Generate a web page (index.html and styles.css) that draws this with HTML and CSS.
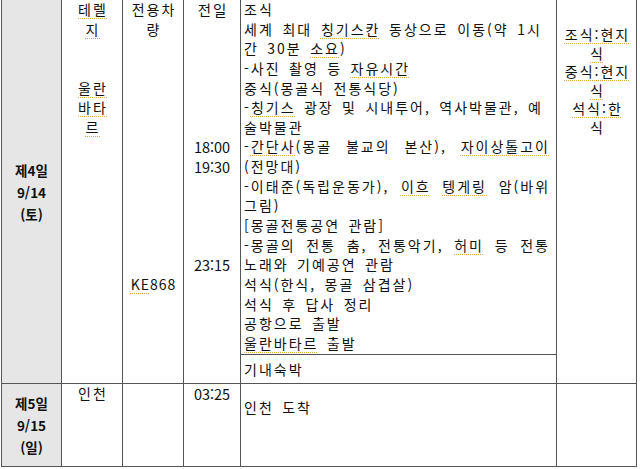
FILE: index.html
```html
<!DOCTYPE html>
<html lang="ko">
<head>
<meta charset="utf-8">
<title>일정표</title>
<link rel="stylesheet" href="styles.css">
</head>
<body>
<table class="itin">
  <colgroup>
    <col class="c-day">
    <col class="c-place">
    <col class="c-car">
    <col class="c-time">
    <col class="c-plan">
    <col class="c-meal">
  </colgroup>
  <tr class="row-main">
    <td class="day" rowspan="2"><div class="day-text">제4일<br>9/14<br>(토)</div></td>
    <td class="place" rowspan="2">
      <div class="ln"><span class="sp">테렐</span></div>
      <div class="ln"><span class="sp">지</span></div>
      <div class="ln">&nbsp;</div>
      <div class="ln">&nbsp;</div>
      <div class="ln"><span class="sp">울란</span></div>
      <div class="ln"><span class="sp">바타</span></div>
      <div class="ln"><span class="sp">르</span></div>
    </td>
    <td class="car" rowspan="2">
      <div class="ln">전용차</div>
      <div class="ln">량</div>
      <div class="ln">&nbsp;</div>
      <div class="ln">&nbsp;</div>
      <div class="ln">&nbsp;</div>
      <div class="ln">&nbsp;</div>
      <div class="ln">&nbsp;</div>
      <div class="ln">&nbsp;</div>
      <div class="ln">&nbsp;</div>
      <div class="ln">&nbsp;</div>
      <div class="ln">&nbsp;</div>
      <div class="ln">&nbsp;</div>
      <div class="ln">&nbsp;</div>
      <div class="ln">&nbsp;</div>
      <div class="ln code"><span class="sp">KE</span>868</div>
    </td>
    <td class="time" rowspan="2">
      <div class="ln hangul">전일</div>
      <div class="ln">&nbsp;</div>
      <div class="ln">&nbsp;</div>
      <div class="ln">&nbsp;</div>
      <div class="ln">&nbsp;</div>
      <div class="ln">&nbsp;</div>
      <div class="ln">&nbsp;</div>
      <div class="ln">18:00</div>
      <div class="ln">19:30</div>
      <div class="ln">&nbsp;</div>
      <div class="ln">&nbsp;</div>
      <div class="ln">&nbsp;</div>
      <div class="ln">&nbsp;</div>
      <div class="ln">23:15</div>
    </td>
    <td class="plan">
      <div class="ln">조식</div>
      <div class="ln full short">세계 최대 <span class="sp">칭기스칸</span> 동상으로 이동(약 1시</div>
      <div class="ln">간 30분 <span class="sp">소요</span>)</div>
      <div class="ln">-사진 촬영 등 <span class="sp">자유시간</span></div>
      <div class="ln">중식(몽골식 전통식당)</div>
      <div class="ln full short">-<span class="sp">칭기스</span> 광장 및 시내투어, 역사박물관, 예</div>
      <div class="ln">술박물관</div>
      <div class="ln full">-<span class="sp">간단사</span>(몽골 불교의 본산), <span class="sp">자이상톨고이</span></div>
      <div class="ln">(전망대)</div>
      <div class="ln full">-이태준(독립운동가), <span class="sp">이흐</span> <span class="sp">텡게링</span> 암(바위</div>
      <div class="ln">그림)</div>
      <div class="ln">[몽골전통공연 관람]</div>
      <div class="ln full">-몽골의 전통 춤, 전통악기, <span class="sp">허미</span> 등 전통</div>
      <div class="ln">노래와 기예공연 관람</div>
      <div class="ln">석식(한식, 몽골 삼겹살)</div>
      <div class="ln">석식 후 답사 정리</div>
      <div class="ln">공항으로 출발</div>
      <div class="ln"><span class="sp">울란바타르</span> 출발</div>
    </td>
    <td class="meal" rowspan="2">
      <div class="mln"><span class="sp">조식:현지</span></div>
      <div class="mln"><span class="sp">식</span></div>
      <div class="mln"><span class="sp">중식:현지</span></div>
      <div class="mln"><span class="sp">식</span></div>
      <div class="mln"><span class="sp">석식:한</span></div>
      <div class="mln">식</div>
    </td>
  </tr>
  <tr class="row-night">
    <td class="plan night">기내숙박</td>
  </tr>
  <tr class="row-day5">
    <td class="day"><div class="day-text">제5일<br>9/15<br>(일)</div></td>
    <td class="place"><div class="ln">인천</div></td>
    <td class="car"></td>
    <td class="time"><div class="ln">03:25</div></td>
    <td class="plan arrive"><div class="ln">인천 도착</div></td>
    <td class="meal"></td>
  </tr>
</table>
</body>
</html>
```

FILE: styles.css
```css
html, body {
  margin: 0;
  padding: 0;
  background: #ffffff;
}

body {
  font-family: "Noto Sans CJK KR", "Noto Sans", sans-serif;
  font-size: 14px;
  color: #111111;
  overflow: hidden;
}

.itin {
  border-collapse: collapse;
  table-layout: fixed;
  width: 636px;
  margin: -1px 0 0 1px;
}

.c-day { width: 60px; }
.c-place { width: 61px; }
.c-car { width: 61px; }
.c-time { width: 57px; }
.c-plan { width: 316px; }
.c-meal { width: 80px; }

.itin td {
  border: 1px solid #555555;
  padding: 0;
  vertical-align: top;
}

.ln {
  height: 19.65px;
  line-height: 19.65px;
  white-space: nowrap;
}

.row-main { height: 355px; }
.row-night { height: 29px; }
.row-day5 { height: 83px; }

.day {
  background: #e6e6e6;
  text-align: center;
  vertical-align: middle !important;
  font-size: 13.5px;
}

.day-text {
  font-weight: bold;
  line-height: 22px;
}

.place, .car, .time {
  text-align: center;
}

.place, .car, .plan, .meal, .hangul {
  letter-spacing: 2px;
  word-spacing: 2.5px;
}

.place .ln, .car .ln, .meal .mln, .hangul {
  padding-left: 2px;
}

.car .code {
  letter-spacing: 1px;
  padding-left: 1px;
}

.time {
  font-size: 14.5px;
}

.plan {
  padding: 0 6px 0 3px !important;
}

.plan .full {
  text-align: justify;
  text-align-last: justify;
}

.plan .short {
  margin-right: 8px;
}

.night {
  vertical-align: middle !important;
  line-height: 19px;
}

.arrive {
  padding-top: 14px !important;
}

.meal {
  text-align: center;
  padding-top: 25px !important;
}

.mln {
  line-height: 18.5px;
  white-space: nowrap;
}

.sp {
  text-decoration: underline dotted #e0a848;
  text-decoration-thickness: 1px;
  text-underline-offset: 3px;
}
```
